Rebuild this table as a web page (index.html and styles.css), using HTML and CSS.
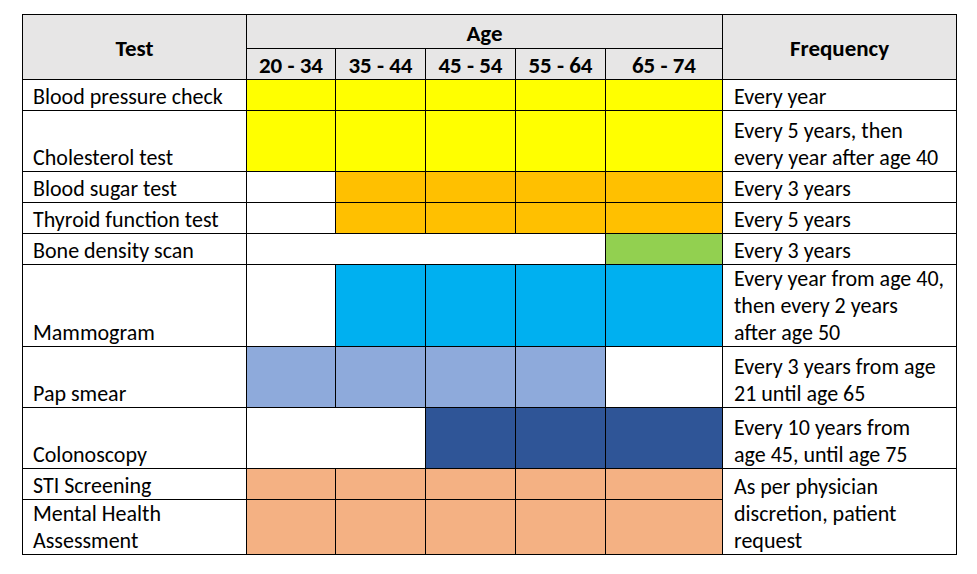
FILE: index.html
```html
<!DOCTYPE html>
<html lang="en">
<head>
<meta charset="utf-8">
<title>Health screening schedule</title>
<link rel="stylesheet" href="styles.css">
</head>
<body>
<table class="grid">
  <colgroup>
    <col class="c-test">
    <col class="c-age">
    <col class="c-age2">
    <col class="c-age2">
    <col class="c-age2">
    <col class="c-age5">
    <col class="c-freq">
  </colgroup>
  <thead>
    <tr class="r34">
      <th rowspan="2" class="mid">Test</th>
      <th colspan="5" class="age">Age</th>
      <th rowspan="2" class="mid">Frequency</th>
    </tr>
    <tr class="r31">
      <th>20 - 34</th>
      <th>35 - 44</th>
      <th>45 - 54</th>
      <th>55 - 64</th>
      <th>65 - 74</th>
    </tr>
  </thead>
  <tbody>
    <tr class="r31">
      <td class="name">Blood pressure check</td>
      <td class="yellow"></td><td class="yellow"></td><td class="yellow"></td><td class="yellow"></td><td class="yellow"></td>
      <td class="freq">Every year</td>
    </tr>
    <tr class="r61">
      <td class="name">Cholesterol test</td>
      <td class="yellow"></td><td class="yellow"></td><td class="yellow"></td><td class="yellow"></td><td class="yellow"></td>
      <td class="freq">Every 5 years, then<br>every year after age 40</td>
    </tr>
    <tr class="r31">
      <td class="name">Blood sugar test</td>
      <td></td><td class="orange"></td><td class="orange"></td><td class="orange"></td><td class="orange"></td>
      <td class="freq">Every 3 years</td>
    </tr>
    <tr class="r31">
      <td class="name">Thyroid function test</td>
      <td></td><td class="orange"></td><td class="orange"></td><td class="orange"></td><td class="orange"></td>
      <td class="freq">Every 5 years</td>
    </tr>
    <tr class="r31">
      <td class="name">Bone density scan</td>
      <td colspan="4"></td><td class="green"></td>
      <td class="freq">Every 3 years</td>
    </tr>
    <tr class="r82">
      <td class="name">Mammogram</td>
      <td></td><td class="blue"></td><td class="blue"></td><td class="blue"></td><td class="blue"></td>
      <td class="freq">Every year from age 40,<br>then every 2 years<br>after age 50</td>
    </tr>
    <tr class="r61">
      <td class="name">Pap smear</td>
      <td class="lightblue"></td><td class="lightblue"></td><td class="lightblue"></td><td class="lightblue"></td><td></td>
      <td class="freq">Every 3 years from age<br>21 until age 65</td>
    </tr>
    <tr class="r61">
      <td class="name">Colonoscopy</td>
      <td colspan="2"></td><td class="navy"></td><td class="navy"></td><td class="navy"></td>
      <td class="freq">Every 10 years from<br>age 45, until age 75</td>
    </tr>
    <tr class="r31">
      <td class="name">STI Screening</td>
      <td class="salmon"></td><td class="salmon"></td><td class="salmon"></td><td class="salmon"></td><td class="salmon"></td>
      <td class="freq" rowspan="2">As per physician<br>discretion, patient<br>request</td>
    </tr>
    <tr class="r54">
      <td class="name">Mental Health<br>Assessment</td>
      <td class="salmon"></td><td class="salmon"></td><td class="salmon"></td><td class="salmon"></td><td class="salmon"></td>
    </tr>
  </tbody>
</table>
</body>
</html>
```
FILE: styles.css
```css
html, body {
  margin: 0;
  padding: 0;
  background: #ffffff;
}

body {
  font-family: Carlito, Lato, "Liberation Sans", sans-serif;
  font-size: 22px;
  color: #000000;
}

.grid {
  margin: 14px 0 0 22px;
  border-collapse: collapse;
  table-layout: fixed;
  width: 935px;
}

.c-test { width: 224px; }
.c-age { width: 89px; }
.c-age2 { width: 90px; }
.c-age5 { width: 117px; }
.c-freq { width: 234px; }

.grid th,
.grid td {
  border: 1px solid #000000;
  padding: 0;
  line-height: 27px;
  white-space: nowrap;
  overflow: hidden;
}

.grid th {
  background: #e7e6e6;
  font-weight: 700;
  font-size: 23px;
  text-align: center;
  vertical-align: bottom;
  padding-bottom: 0;
}

.grid th.mid {
  vertical-align: middle;
  padding-top: 2px;
}

.grid th.age {
  vertical-align: middle;
  padding-top: 3px;
}

.grid td {
  vertical-align: bottom;
  background: #ffffff;
}

.grid td.name {
  padding-left: 10px;
}

.grid td.freq {
  padding-left: 11px;
}

.r34 { height: 34px; }
.r31 { height: 31px; }
.r54 { height: 54px; }
.r61 { height: 61px; }
.r82 { height: 82px; }

.grid td.yellow { background: #ffff00; }
.grid td.orange { background: #ffc000; }
.grid td.green { background: #92d050; }
.grid td.blue { background: #00b0f0; }
.grid td.lightblue { background: #8eaadb; }
.grid td.navy { background: #2f5597; }
.grid td.salmon { background: #f4b183; }
```
